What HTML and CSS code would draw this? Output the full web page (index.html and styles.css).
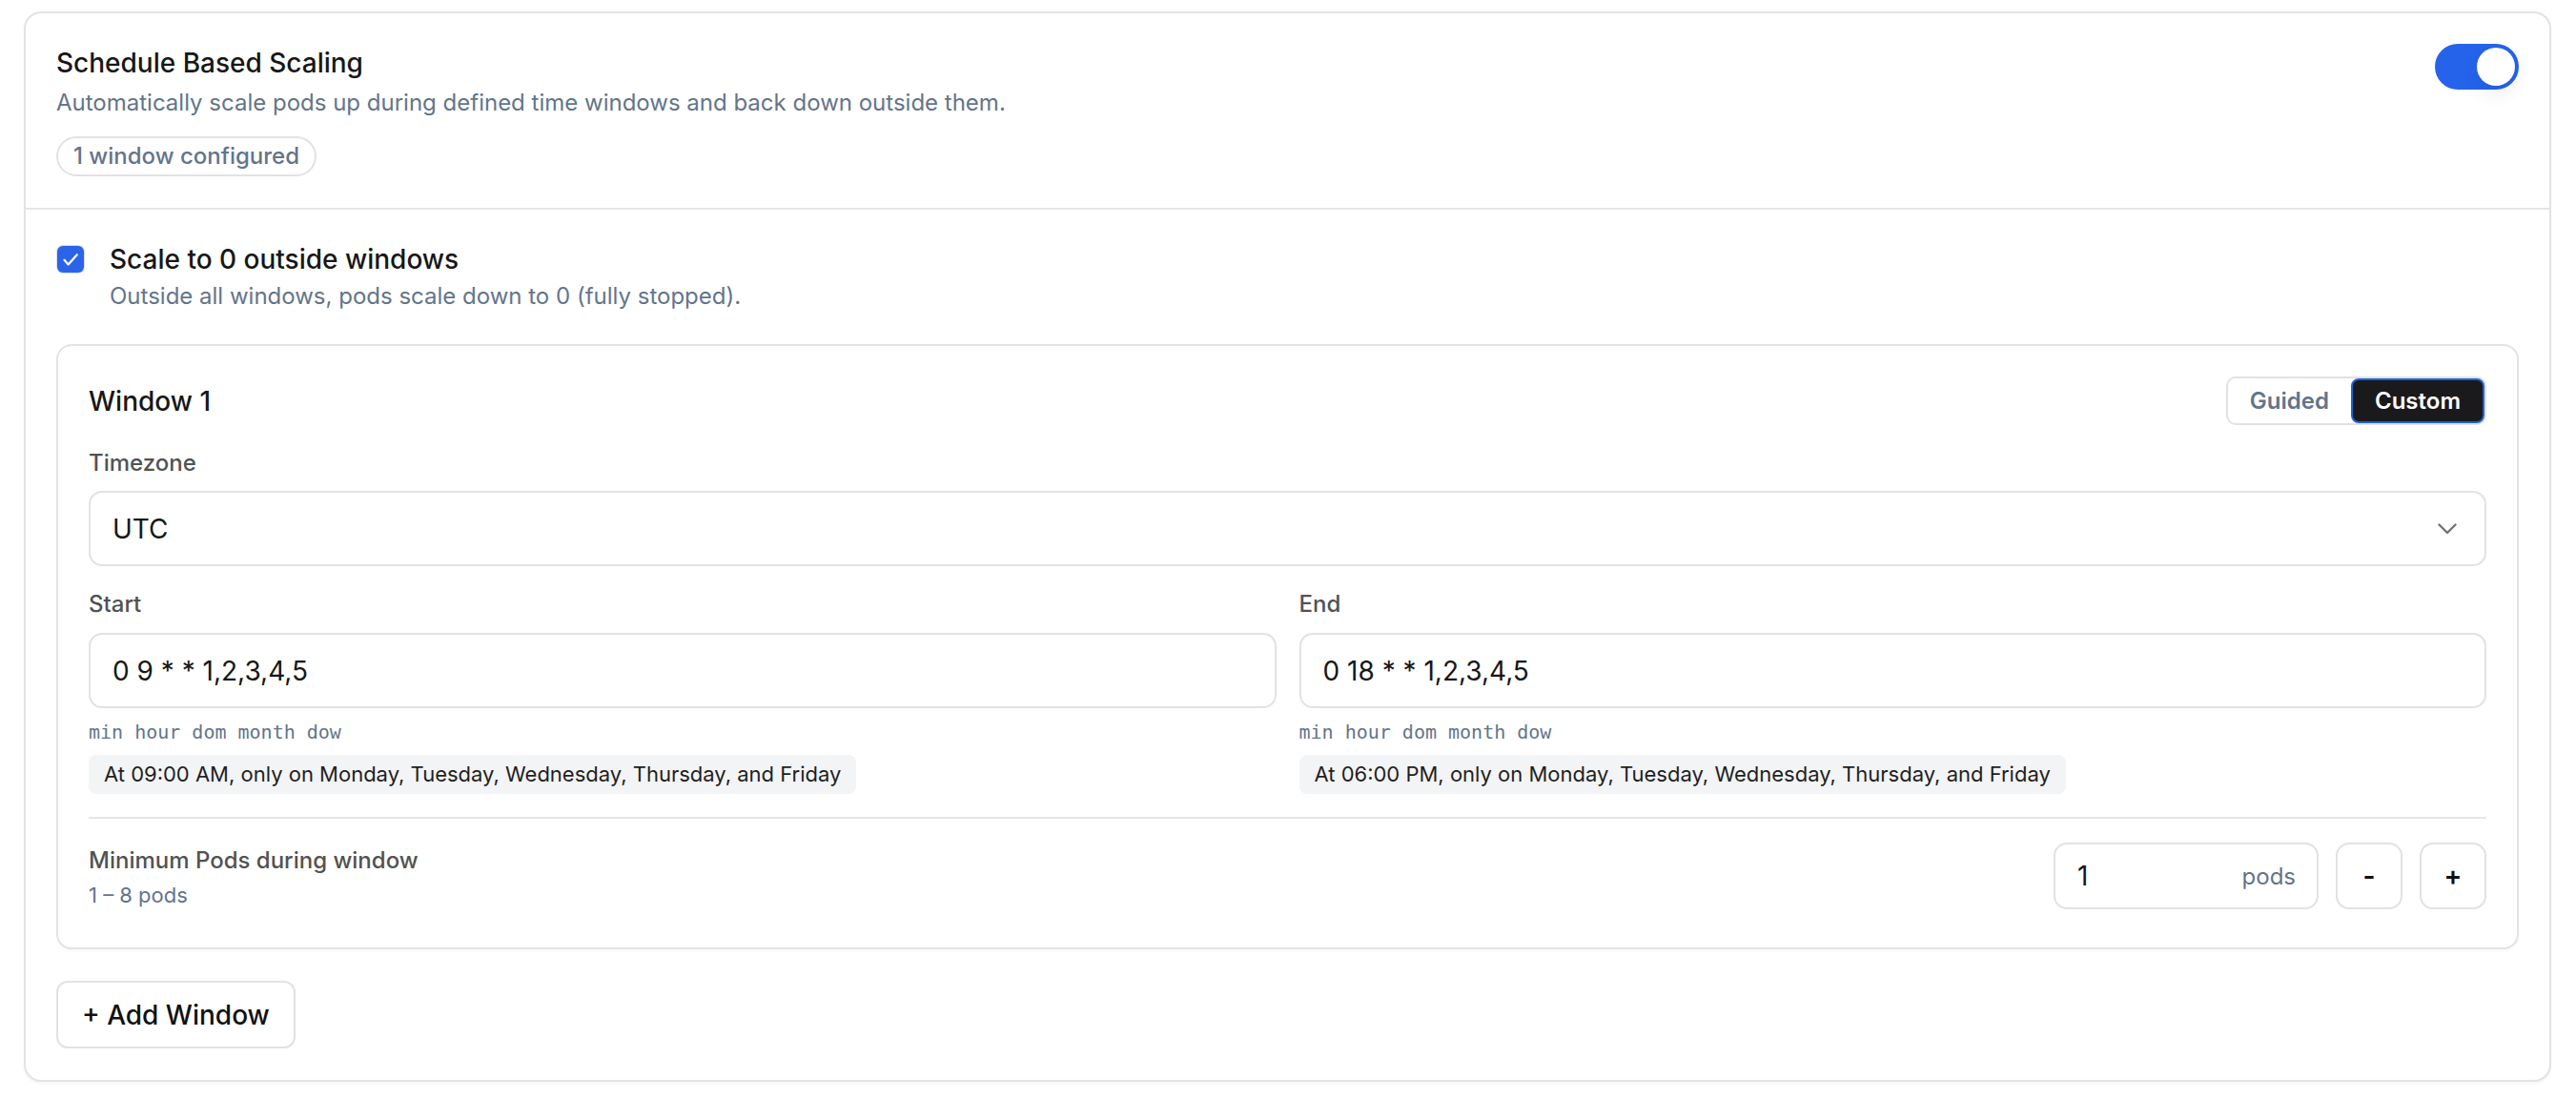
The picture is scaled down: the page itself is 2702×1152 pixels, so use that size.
FILE: index.html
```html
<!DOCTYPE html>
<html lang="en">
<head>
<meta charset="utf-8">
<title>Schedule Based Scaling</title>
<link rel="stylesheet" href="styles.css">
</head>
<body>
<div class="page">
  <section class="card">
    <header class="card-head">
      <div class="head-text">
        <div class="title">Schedule Based Scaling</div>
        <div class="desc">Automatically scale pods up during defined time windows and back down outside them.</div>
        <span class="pill">1 window configured</span>
      </div>
      <div class="toggle"><span class="knob"></span></div>
    </header>

    <div class="card-body">
      <div class="scale-row">
        <span class="checkbox">
          <svg width="28" height="28" viewBox="0 0 28 28"><path d="M7.5 14.8 L11.6 19.4 L20.8 9.2" fill="none" stroke="#fff" stroke-width="2.2" stroke-linecap="round" stroke-linejoin="round"/></svg>
        </span>
        <div class="scale-text">
          <div class="scale-label">Scale to 0 outside windows</div>
          <div class="scale-desc">Outside all windows, pods scale down to 0 (fully stopped).</div>
        </div>
      </div>

      <div class="window-card">
        <div class="window-head">
          <div class="window-title">Window 1</div>
          <div class="segmented">
            <span class="seg">Guided</span>
            <span class="seg seg-active">Custom</span>
          </div>
        </div>

        <div class="field-label tz-label">Timezone</div>
        <div class="select">
          <span>UTC</span>
          <svg class="chev" width="20" height="12" viewBox="0 0 20 12"><polyline points="1.5,1.5 10,10 18.5,1.5" fill="none" stroke="#737373" stroke-width="2.4" stroke-linecap="round" stroke-linejoin="round"/></svg>
        </div>

        <div class="cron-grid">
          <div class="cron-col">
            <div class="field-label">Start</div>
            <div class="input">0 9 * * 1,2,3,4,5</div>
            <div class="mono">min hour dom month dow</div>
            <div class="chip">At 09:00 AM, only on Monday, Tuesday, Wednesday, Thursday, and Friday</div>
          </div>
          <div class="cron-col">
            <div class="field-label">End</div>
            <div class="input">0 18 * * 1,2,3,4,5</div>
            <div class="mono">min hour dom month dow</div>
            <div class="chip">At 06:00 PM, only on Monday, Tuesday, Wednesday, Thursday, and Friday</div>
          </div>
        </div>

        <div class="divider"></div>

        <div class="pods-row">
          <div class="pods-text">
            <div class="pods-label">Minimum Pods during window</div>
            <div class="pods-range">1 – 8 pods</div>
          </div>
          <div class="pods-controls">
            <div class="pods-input"><span class="pods-value">1</span><span class="pods-unit">pods</span></div>
            <button class="step">-</button>
            <button class="step">+</button>
          </div>
        </div>
      </div>

      <button class="add-btn">+ Add Window</button>
    </div>
  </section>
</div>
</body>
</html>
```

FILE: styles.css
```css
* { box-sizing: border-box; }

body {
  margin: 0;
  background: #ffffff;
  font-family: Inter, "Noto Sans", "Liberation Sans", sans-serif;
  color: #171717;
}

.page {
  padding: 12px 26px 20px 25px;
}

.card {
  border: 2px solid #e3e3e3;
  border-radius: 18px;
  background: #fff;
  box-shadow: 0 2px 3px rgba(0, 0, 0, 0.04);
}

.card-head {
  display: flex;
  justify-content: space-between;
  align-items: flex-start;
  padding: 32px 32px 33px;
  border-bottom: 2px solid #e5e5e5;
}

.title {
  font-size: 28px;
  font-weight: 500;
  line-height: 40px;
  color: #171717;
}

.desc {
  margin-top: 4px;
  font-size: 24px;
  line-height: 36px;
  color: #64748b;
}

.pill {
  margin-top: 17px;
  display: inline-block;
  height: 42px;
  border: 2px solid #e2e2e2;
  border-radius: 999px;
  padding: 0 16px;
  font-size: 24px;
  line-height: 38px;
  font-weight: 500;
  color: #64748b;
}

.toggle {
  width: 88px;
  height: 48px;
  border-radius: 24px;
  background: #2563eb;
  display: flex;
  align-items: center;
  justify-content: flex-end;
  padding-right: 4px;
}

.knob {
  width: 40px;
  height: 40px;
  border-radius: 50%;
  background: #fff;
  box-shadow: 0 8px 20px rgba(0, 0, 0, 0.08);
}

.card-body {
  padding: 32px 32px 33px;
}

.scale-row {
  display: flex;
  align-items: flex-start;
  gap: 27px;
}

.checkbox {
  margin-top: 6px;
  margin-left: 1px;
  width: 28px;
  height: 28px;
  border-radius: 6px;
  background: #2b64e8;
  box-shadow: 0 0 0 1px #d8def0;
  display: flex;
}

.scale-label {
  font-size: 28px;
  line-height: 40px;
  font-weight: 500;
  color: #171717;
}

.scale-desc {
  margin-top: 1px;
  font-size: 24px;
  line-height: 36px;
  color: #64748b;
}

.window-card {
  margin-top: 32px;
  border: 2px solid #e3e3e3;
  border-radius: 16px;
  padding: 32px 32px 40px;
  box-shadow: 0 2px 3px rgba(0, 0, 0, 0.03);
}

.window-head {
  display: flex;
  justify-content: space-between;
  align-items: center;
}

.window-title {
  font-size: 28px;
  font-weight: 500;
  line-height: 40px;
  color: #171717;
}

.segmented {
  display: flex;
  border: 2px solid #e2e2e2;
  border-radius: 10px;
  height: 51px;
}

.seg {
  display: flex;
  align-items: center;
  padding: 0 23px;
  font-size: 24px;
  font-weight: 600;
  color: #64748b;
}

.seg-active {
  background: #1a1a1c;
  color: #fff;
  border: 2px solid #1e63d6;
  border-radius: 8px;
  margin: 0;
}

.field-label {
  font-size: 24px;
  line-height: 32px;
  font-weight: 500;
  color: #525252;
}

.tz-label {
  margin-top: 24px;
}

.select {
  margin-top: 13px;
  height: 79px;
  border: 2px solid #e2e2e2;
  border-radius: 14px;
  display: flex;
  align-items: center;
  justify-content: space-between;
  padding: 0 29px 0 23px;
  font-size: 28px;
  color: #171717;
}

.cron-grid {
  margin-top: 24px;
  display: grid;
  grid-template-columns: 1fr 1fr;
  gap: 24px;
}

.cron-col {
  display: flex;
  flex-direction: column;
  align-items: flex-start;
}

.input {
  margin-top: 14px;
  width: 100%;
  height: 79px;
  border: 2px solid #e2e2e2;
  border-radius: 14px;
  display: flex;
  align-items: center;
  padding: 0 23px;
  font-size: 28px;
  color: #171717;
}

.mono {
  margin-top: 11px;
  font-family: "DejaVu Sans Mono", "Liberation Mono", monospace;
  font-size: 20px;
  line-height: 28px;
  color: #64748b;
}

.chip {
  margin-top: 10px;
  height: 41px;
  line-height: 41px;
  padding: 0 16px;
  border-radius: 8px;
  background: #f3f4f6;
  font-size: 22px;
  color: #1f1f1f;
}

.divider {
  margin-top: 24px;
  height: 2px;
  background: #e5e5e5;
}

.pods-row {
  margin-top: 25px;
  display: flex;
  justify-content: space-between;
  align-items: center;
}

.pods-label {
  font-size: 24px;
  line-height: 36px;
  font-weight: 500;
  color: #525252;
}

.pods-range {
  margin-top: 3px;
  font-size: 22px;
  line-height: 30px;
  color: #64748b;
}

.pods-controls {
  display: flex;
  gap: 18px;
}

.pods-input {
  width: 278px;
  height: 70px;
  border: 2px solid #e2e2e2;
  border-radius: 14px;
  display: flex;
  align-items: center;
  justify-content: space-between;
  padding: 0 22px 0 23px;
}

.pods-value {
  font-size: 28px;
  color: #171717;
}

.pods-unit {
  font-size: 24px;
  color: #64748b;
}

.step {
  width: 70px;
  height: 70px;
  border: 2px solid #e2e2e2;
  border-radius: 14px;
  background: #fff;
  font-family: Inter, "Noto Sans", sans-serif;
  font-size: 28px;
  font-weight: 600;
  color: #111;
  padding: 0;
}

.add-btn {
  margin-top: 33px;
  height: 71px;
  padding: 0 25px;
  border: 2px solid #e2e2e2;
  border-radius: 12px;
  background: #fff;
  font-family: Inter, "Noto Sans", sans-serif;
  font-size: 28px;
  font-weight: 500;
  color: #111;
}
```
